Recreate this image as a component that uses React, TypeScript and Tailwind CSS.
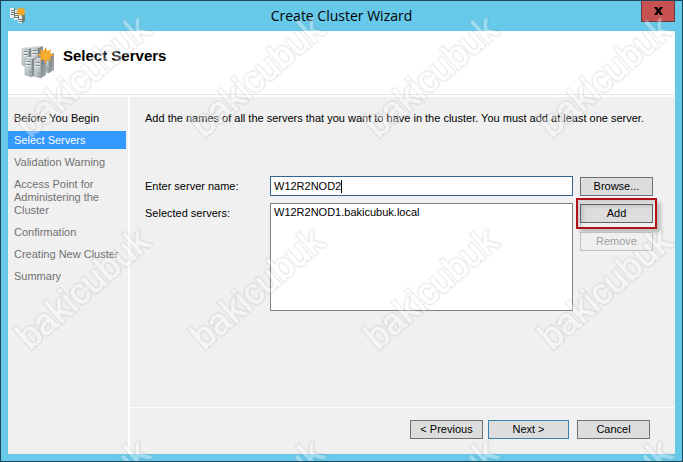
import { useState } from 'react'
import clsx from 'clsx'

const STEPS = [
  { label: 'Before You Begin', state: 'done' },
  { label: 'Select Servers', state: 'current' },
  { label: 'Validation Warning', state: 'todo' },
  { label: 'Access Point for Administering the Cluster', state: 'todo' },
  { label: 'Confirmation', state: 'todo' },
  { label: 'Creating New Cluster', state: 'todo' },
  { label: 'Summary', state: 'todo' },
]

const MARK_COLS = [0, 1, 2, 3]
const MARK_ROWS = [0, 1, 2]

// One tower of the cluster: light front face, darker side, drive slots on top.
function Tower({ x, y }: { x: number; y: number }) {
  return (
    <g transform={`translate(${x} ${y})`}>
      <path d="M0 2 L3 0 H12 L7 2 Z" fill="#dfe5e7" />
      <path d="M7 2 L12 0 V17 L7 20 Z" fill="url(#side)" />
      <path d="M0 2 H7 V20 L0 18 Z" fill="url(#front)" stroke="#89949a" strokeWidth="0.5" />
      <path d="M1.5 4.5 H5.5 M1.5 7.5 H5.5" stroke="#6d787d" strokeWidth="0.9" />
      <path d="M1.5 5.7 H5.5 M1.5 8.7 H5.5" stroke="#fff" strokeWidth="0.8" />
      <circle cx="5" cy="15" r="0.8" fill="#78a46d" />
    </g>
  )
}

function ClusterIcon({ className }: { className: string }) {
  return (
    <svg viewBox="0 0 34 34" className={className} aria-hidden="true">
      <defs>
        <linearGradient id="front" x1="0" y1="0" x2="1" y2="1">
          <stop offset="0" stopColor="#e6eaeb" />
          <stop offset="1" stopColor="#9ba5a9" />
        </linearGradient>
        <linearGradient id="side" x1="0" y1="0" x2="1" y2="1">
          <stop offset="0" stopColor="#70797c" />
          <stop offset="1" stopColor="#a9b1b4" />
        </linearGradient>
        <radialGradient id="burst">
          <stop offset="0" stopColor="#fbb637" />
          <stop offset="1" stopColor="#ef9a1c" />
        </radialGradient>
      </defs>
      <Tower x={2} y={2} />
      <Tower x={11} y={1} />
      <Tower x={22} y={8} />
      <Tower x={5} y={12} />
      <Tower x={14} y={13} />
      <path
        transform="translate(0.5 2)"
        d="M25 0 L26.8 4.2 L31 2.2 L29.4 6.3 L34 8 L29.5 9.8 L31.4 14 L27 12.2 L25.2 16.5 L23.4 12.2 L19 14.2 L20.8 9.9 L16.4 8.2 L20.8 6.3 L18.8 2.2 L23.2 4.1 Z"
        fill="url(#burst)"
      />
    </svg>
  )
}

// Title bar size: three small towers in a staircase with the star on top.
function SmallClusterIcon({ className }: { className: string }) {
  return (
    <svg viewBox="0 0 16 16" className={className} aria-hidden="true">
      <path d="M0 1 H5 V11 H0 Z M4 3 H9 V13 H4 Z M8 7 H13 V16 H8 Z" fill="#e9edee" />
      <path d="M4 1 H5 V11 H4 Z M8 3 H9 V13 H8 Z M12 7 H15 V14 L13 16 H12 Z" fill="#6f8272" />
      <path
        d="M1 3.5 H4 M1 5.5 H4 M1 7.5 H4 M5 6.5 H8 M5 8.5 H8 M5 10.5 H8 M9 12.5 H12 M9 14.5 H12"
        stroke="#4d5a5e"
        strokeWidth="0.8"
      />
      <path
        d="M11 0 L12.2 1.8 L14.6 0.8 L14 3.2 L16 4.6 L14 6 L14.6 8.4 L12.2 7.6 L11 9.6 L9.6 7.6 L7.4 8.4 L8 6 L6 4.6 L8 3.2 L7.4 0.8 L9.8 1.8 Z"
        fill="#f5a623"
      />
    </svg>
  )
}

// The filter keeps a thin grey ring around each letter and a translucent
// white inside, so the mark reads as an embossed outline.
function Watermark() {
  return (
    <svg
      className="pointer-events-none absolute inset-0 h-full w-full font-['Liberation_Sans',sans-serif] text-[36px]"
      aria-hidden="true"
    >
      <defs>
        <filter id="emboss" x="-5%" y="-5%" width="110%" height="110%" colorInterpolationFilters="sRGB">
          <feMorphology in="SourceAlpha" operator="dilate" radius="0.8" result="outer" />
          <feFlood floodColor="#808080" floodOpacity="0.2" />
          <feComposite in2="outer" operator="in" />
          <feComposite in2="SourceAlpha" operator="out" result="ring" />
          <feFlood floodColor="#ffffff" floodOpacity="0.35" />
          <feComposite in2="SourceAlpha" operator="in" result="fill" />
          <feMerge>
            <feMergeNode in="ring" />
            <feMergeNode in="fill" />
          </feMerge>
        </filter>
      </defs>
      {MARK_ROWS.map((row) =>
        MARK_COLS.map((col) => (
          <text
            key={`${row}-${col}`}
            transform={`translate(${29 + col * 174} ${138 + row * 212}) rotate(-41)`}
            filter="url(#emboss)"
            stroke="#000000"
            strokeWidth="1"
          >
            bakicubuk
          </text>
        )),
      )}
    </svg>
  )
}

interface ButtonProps {
  children: string
  className?: string
  disabled?: boolean
  onClick?: () => void
}

function Button({ children, className, disabled, onClick }: ButtonProps) {
  return (
    <button
      type="button"
      disabled={disabled}
      onClick={onClick}
      className={clsx(
        'flex h-[19px] items-center justify-center border leading-none',
        disabled ? 'border-[#bfbfbf] bg-[#efefef] text-[#a0a0a0]' : 'bg-[#dddddd]',
        className,
      )}
    >
      {children}
    </button>
  )
}

export default function App() {
  const [name, setName] = useState('W12R2NOD2')
  const [servers, setServers] = useState(['W12R2NOD1.bakicubuk.local'])

  const add = () => {
    if (!name) return
    setServers([...servers, `${name}.bakicubuk.local`])
    setName('')
  }

  return (
    <div className="relative flex min-h-screen flex-col overflow-hidden border border-[#1c4659] bg-[#66c9ea] px-[7px] pb-[7px] font-['Liberation_Sans',sans-serif] text-[11px] leading-[13px] text-black">
      <header className="flex h-[30px] items-start">
        <SmallClusterIcon className="mt-[6px] ml-[2px] h-4 w-4 shrink-0" />
        <h1 className="flex-1 pt-[5px] pl-4 text-center font-['Open_Sans',sans-serif] text-[14px] leading-5">
          Create Cluster Wizard
        </h1>
        <button
          type="button"
          aria-label="Close"
          className="flex h-[21px] w-[34px] items-center justify-center border border-t-0 border-[#6b3a3a] bg-[#c75050]"
        >
          <svg viewBox="0 0 9 8" className="h-2 w-[9px]" aria-hidden="true">
            <path d="M0 0 H3 L4.5 2.3 L6 0 H9 L6.2 4 L9 8 H6 L4.5 5.7 L3 8 H0 L2.8 4 Z" />
          </svg>
        </button>
      </header>

      <div className="flex flex-1 flex-col bg-white">
        <div className="flex h-16 items-start gap-[9px] border-b border-[#e6e6e6] px-3 pt-[14px]">
          <ClusterIcon className="h-[34px] w-[34px]" />
          <h2 className="pt-px text-[15px] leading-5 font-bold">Select Servers</h2>
        </div>

        <div className="mt-[2px] flex flex-1 gap-[2px]">
          <nav className="w-[120px] shrink-0 bg-[#f0f0f0] pt-3">
            <ol className="flex flex-col gap-1">
              {STEPS.map((step) => (
                <li
                  key={step.label}
                  aria-current={step.state === 'current' ? 'step' : undefined}
                  className={clsx(
                    'mr-[2px] pt-[3px] pb-[2px] pl-[6px]',
                    step.state === 'current' && 'bg-[#3399ff] text-white',
                    step.state === 'todo' && 'text-[#707070]',
                  )}
                >
                  {step.label}
                </li>
              ))}
            </ol>
          </nav>

          <main className="flex min-w-0 flex-1 flex-col bg-[#f0f0f0]">
            <div className="flex-1 pt-[15px] pr-[22px] pl-[15px]">
              <p>
                Add the names of all the servers that you want to have in the cluster. You must add
                at least one server.
              </p>

              <div className="mt-[51px] flex gap-[7px]">
                <div className="grid flex-1 grid-cols-[125px_1fr] gap-y-[7px]">
                  <label htmlFor="server-name" className="pt-1">
                    Enter server name:
                  </label>
                  <div className="flex h-5 items-center border border-[#33648f] bg-white pl-[3px]">
                    <input
                      id="server-name"
                      value={name}
                      onChange={(e) => setName(e.target.value)}
                      className="field-sizing-content caret-transparent outline-none"
                    />
                    <span className="h-[13px] w-px bg-black" />
                  </div>
                  <label htmlFor="server-list" className="pt-1">
                    Selected servers:
                  </label>
                  <select
                    id="server-list"
                    size={7}
                    className="h-[108px] overflow-hidden border border-[#7a8189] bg-white pt-[2px] pl-[3px] outline-none"
                  >
                    {servers.map((s) => (
                      <option key={s} className="p-0">
                        {s}
                      </option>
                    ))}
                  </select>
                </div>

                <div className="flex w-[73px] flex-col pt-px">
                  <Button className="border-[#707070]">Browse...</Button>
                  <div className="-mx-1 mt-[2px] border-2 border-[#b01217] px-[2px] py-1 shadow-[4px_4px_4px_rgba(0,0,0,0.2),inset_4px_4px_3px_rgba(0,0,0,0.12)]">
                    <Button
                      onClick={add}
                      className="w-full border-[#606060] shadow-[inset_3px_2px_3px_rgba(0,0,0,0.1)]"
                    >
                      Add
                    </Button>
                  </div>
                  <Button disabled className="mt-[3px]">
                    Remove
                  </Button>
                </div>
              </div>
            </div>

            <footer className="flex justify-end border-t border-white pt-3 pr-[25px] pb-[15px]">
              <Button className="w-[73px] border-[#707070]">{'< Previous'}</Button>
              <Button className="ml-[5px] w-[81px] border-[#3c7fb1]">{'Next >'}</Button>
              <Button className="ml-2 w-[73px] border-[#707070]">Cancel</Button>
            </footer>
          </main>
        </div>
      </div>

      <Watermark />
    </div>
  )
}
